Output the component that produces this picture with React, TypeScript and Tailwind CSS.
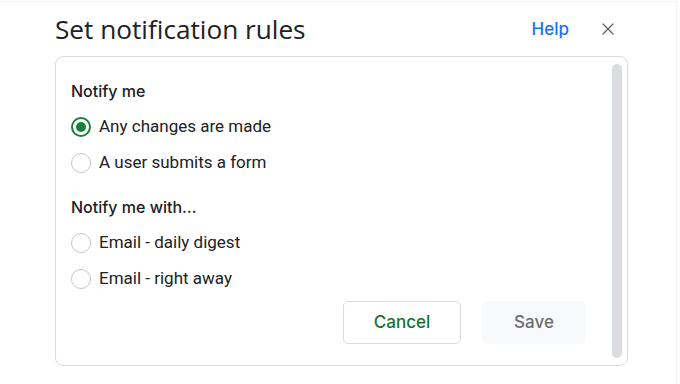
import { X } from "lucide-react";

const Radio = ({ checked, label }: { checked?: boolean; label: string }) => (
  <label className="flex items-center h-[36px] gap-[8px] cursor-pointer">
    {checked ? (
      <span className="w-[20px] h-[20px] rounded-full border-2 border-[#188038] flex items-center justify-center">
        <span className="w-[10px] h-[10px] rounded-full bg-[#188038]" />
      </span>
    ) : (
      <span className="w-[20px] h-[20px] rounded-full border-[1.5px] border-[#c4c7c5]" />
    )}
    <span className="text-[17px] text-[#202124]">{label}</span>
  </label>
);

const medium = { fontFamily: "Inter, Roboto, sans-serif" };

const App = () => {
  return (
    <div className="w-[680px] h-[384px] bg-white overflow-hidden" style={{ fontFamily: "Roboto, 'Liberation Sans', sans-serif" }}>
      <div className="mt-px w-[677px] h-[383px] border-t border-r border-[#f3f3f3]">
        {/* Header */}
        <div className="flex items-center h-[54px] pl-[55px] pr-[58px]">
          <h1
            className="flex-1 text-[26.2px] text-[#202124] leading-none mt-[1px]"
            style={{ fontFamily: "'Open Sans', Roboto, sans-serif" }}
          >
            Set notification rules
          </h1>
          <a href="#" className="text-[17px] font-medium text-[#1a73e8] mr-[29px] mt-[2px]" style={medium}>
            Help
          </a>
          <button className="text-[#5f6368] -mt-[1px]" aria-label="Close">
            <X className="w-[20px] h-[20px]" strokeWidth={1.5} />
          </button>
        </div>

        {/* Card */}
        <div className="ml-[55px] w-[573px] h-[310px] border border-[#dadce0] rounded-lg flex">
          <div className="flex-1 pl-[15px] pt-[22px]">
            <p className="text-[16px] leading-[24px] font-medium text-[#202124]" style={medium}>Notify me</p>
            <div className="mt-[6px]">
              <Radio checked label="Any changes are made" />
              <Radio label="A user submits a form" />
            </div>
            <p className="mt-[14px] text-[16px] leading-[24px] font-medium text-[#202124]" style={medium}>Notify me with…</p>
            <div className="mt-[6px]">
              <Radio label="Email - daily digest" />
              <Radio label="Email - right away" />
            </div>
            <div className="mt-[4px] flex justify-end gap-[21px] pr-[26px]">
              <button className="w-[118px] h-[43px] rounded-[5px] border border-[#dadce0] text-[17px] font-medium text-[#137333]" style={medium}>
                Cancel
              </button>
              <button className="w-[104px] h-[43px] rounded-[5px] bg-[#f8f9fa] text-[17px] font-medium text-[#6b6e72]" style={medium}>
                Save
              </button>
            </div>
          </div>
          {/* Scrollbar */}
          <div className="w-[10px] mt-[7px] mb-[7px] mr-[5px] rounded-full bg-[#dadce0]" />
        </div>
      </div>
    </div>
  );
};

export default App;
